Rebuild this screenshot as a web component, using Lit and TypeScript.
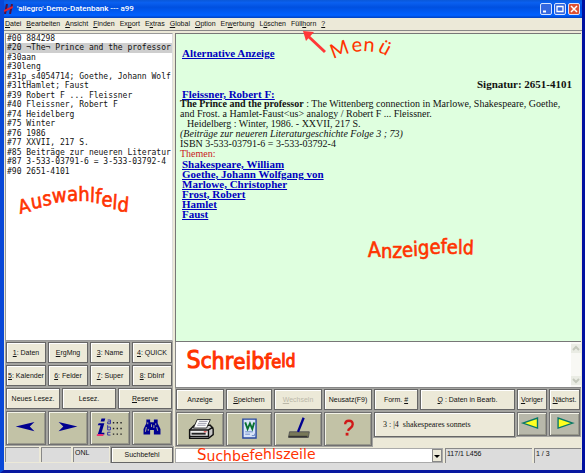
import { LitElement, html, svg, css } from "lit";
import { customElement, property } from "lit/decorators.js";

/** Character, baseline, font size, rotation in degrees, and an optional start of its own. */
type Glyph = [char: string, y: number, size: number, turn: number, x?: number];

/** A hand-placed caption whose letters follow a curve. */
@customElement("curved-note")
export class CurvedNote extends LitElement {
  @property({ attribute: false }) glyphs: Glyph[] = [];
  static styles = css`
    :host { display: block; pointer-events: none; }
    svg { display: block; overflow: visible; width: 10px; height: 10px; }
    text { font-family: var(--note-font, "DejaVu Sans Condensed", "DejaVu Sans", sans-serif); fill: #ff3300; stroke: #ff3300; stroke-width: var(--note-stroke, 0); }
  `;
  render() {
    return html`<svg role="img" aria-label=${this.glyphs.map((g) => g[0]).join("")}>
      <text>${this.glyphs.map(([c, y, s, r, x]) =>
        x === undefined
          ? svg`<tspan y=${y} rotate=${r} font-size=${s}>${c}</tspan>`
          : svg`<tspan x=${x} y=${y} rotate=${r} font-size=${s}>${c}</tspan>`)}</text>
    </svg>`;
  }
}

const auswahl: Glyph[] = [
  ["A", 214, 19, -14, 20], ["u", 209, 20, -9], ["s", 206, 20, -6], ["w", 203, 20, -5], ["a", 201, 20, -1], ["h", 201, 20, 0],
  ["l", 202, 20, 2], ["f", 203, 20, 4], ["e", 206, 20, 5], ["l", 209, 20, 4], ["d", 211, 20, 5],
];
const anzeige: Glyph[] = [
  ["A", 257, 21, -2, 368], ["n", 258, 20, 0], ["z", 258, 21, 0], ["e", 257, 20, -2], ["i", 256, 20, -2], ["g", 255, 20, -3],
  ["e", 254, 20, -2], ["f", 253, 19, 0], ["e", 254, 20, 0], ["l", 254, 19, 0], ["d", 254, 19, 2],
];
const schreib: Glyph[] = [
  ["S", 368, 24, -2, 187], ["c", 368, 22, 0], ["h", 369, 23, 0], ["r", 369, 23, 0], ["e", 369, 22, 0], ["i", 369, 23, 0],
  ["b", 369, 23, 0], ["f", 369, 22, 0], ["e", 368, 18, 0], ["l", 367, 18, 0], ["d", 367, 17, 0],
];
const suche: Glyph[] = [
  ["S", 460, 15, 0, 197], ["u", 461, 14, 0], ["c", 461, 14, 0], ["h", 461, 14, 0], ["b", 461, 14, 0], ["e", 461, 14, 0],
  ["f", 460, 14, 0], ["e", 460, 14, 0], ["h", 459, 14, 0], ["l", 459, 14, 0], ["s", 459, 14, 0], ["z", 459, 14, 0],
  ["e", 459, 14, 0], ["i", 459, 14, 0], ["l", 459, 14, 0], ["e", 459, 14, 0],
];
const menue: Glyph[] = [
  ["M", 59, 20, -20, 333], ["e", 52, 20, -4, 352], ["n", 51, 20, 5, 363], ["ü", 51, 20, 28, 377],
];

const menus: [string, string, string][] = [
  ["", "D", "atei"], ["", "B", "earbeiten"], ["", "A", "nsicht"], ["", "F", "inden"], ["Ex", "p", "ort"], ["E", "x", "tras"],
  ["", "G", "lobal"], ["", "O", "ption"], ["Er", "w", "erbung"], ["L", "ö", "schen"], ["Füll", "h", "orn"], ["", "?", ""],
];

const fields = [
  "#00 884298", "#20 ¬The¬ Prince and the professor", "#30aan", "#30leng", "#31p_s4054714; Goethe, Johann Wolf",
  "#31tHamlet; Faust", "#39 Robert F ... Fleissner", "#40 Fleissner, Robert F", "#74 Heidelberg", "#75 Winter",
  "#76 1986", "#77 XXVII, 217 S.", "#85 Beiträge zur neueren Literatur", "#87 3-533-03791-6 = 3-533-03792-4", "#90 2651-4101",
];

const themes = ["Shakespeare, William", "Goethe, Johann Wolfgang von", "Marlowe, Christopher", "Frost, Robert", "Hamlet", "Faust"];

const arrowLeft = html`<svg class="pic" viewBox="0 0 40 34"><path d="M9 15.500L29 10.500l-5 5 5 5z" fill="#000090"/></svg>`;
const arrowRight = html`<svg class="pic" viewBox="0 0 40 34"><path d="M30 15.500L10 10.500l5 5-5 5z" fill="#000090"/></svg>`;
const indexIcon = html`<svg class="pic" viewBox="0 0 40 34">
  <path d="M11 7h4l-1 3h-4zM8 12h6l-3 10h3v2H7l3-10H7z" fill="#000090"/><path d="M6 24.500h7" stroke="#f03070" stroke-width="2"/>
  <g fill="none" stroke="#3030a8"><path d="M17.500 8.500h3v4h-3v-2h3M17.500 14v5h3v-3h-3M20.500 21.500h-3v3h3"/></g>
  <path d="M23 11.500h10M23 17.500h10M23 23.500h10" stroke="#222" stroke-width="1.500" stroke-dasharray="1.500 2.500"/></svg>`;
const binoculars = html`<svg class="pic" viewBox="0 0 40 34">
  <path d="M14 8h4v3h4V8h4v4l3 6v6h-7v-5h-4v5h-7v-6l3-6z" fill="#000090"/>
  <path d="M15.500 11v2M14 16l-1 5M19.500 13v3M24 12v2M25 16l1 4M16 18v2M22 14v3" stroke="#b8b8a0" fill="none"/></svg>`;
const printer = html`<svg class="pic" viewBox="0 0 46 34">
  <path d="M12 18l5-5h17l3 4v6l-5 4H12z" fill="#c8c8c8" stroke="#111" stroke-width="1.500"/>
  <path d="M16 16l4-9h14l-4 9z" fill="#fff" stroke="#222"/><path d="M22 9h9M21 11h9M20 13h9" stroke="#99a"/>
  <path d="M12 18h20v7H12zM32 18l5-3" fill="#eee" stroke="#111" stroke-width="1.500"/><path d="M14 22h15" stroke="#222" stroke-width="2"/><path d="M27 20h3" stroke="#d22"/></svg>`;
const wordDoc = html`<svg class="pic" viewBox="0 0 46 34">
  <path d="M16.500 6.500h14v20h-14z" fill="#d8e4f8" stroke="#2848a0" stroke-width="1.500"/>
  <path d="M19 10l2.500 7 2.500-6 2.500 6 2-7" fill="none" stroke="#087030" stroke-width="2"/>
  <path d="M19 20h8M19 22.500h5M26 24h3v-2" stroke="#6888c8" fill="none"/></svg>`;
const brush = html`<svg class="pic" viewBox="0 0 46 34">
  <path d="M14 20h21l-1 6H13z" fill="#787858" stroke="#555"/><path d="M13 25h20" stroke="#333" stroke-width="1.500"/>
  <path d="M23 20L29 5" stroke="#000090" stroke-width="2.500"/></svg>`;
const question = html`<svg class="pic" viewBox="0 0 46 34">
  <path d="M20 12c0-5 8-5 8 0 0 4-4 4-5 7" fill="none" stroke="#d01818" stroke-width="2.500"/><path d="M20.500 22.500h3" stroke="#d01818" stroke-width="3"/></svg>`;
const prev = html`<svg class="pic" viewBox="0 0 30 24"><path d="M5 11L21 5.500v11z" fill="#ffff20" stroke="#087868" stroke-width="1.500"/></svg>`;
const next = html`<svg class="pic" viewBox="0 0 30 24"><path d="M24 11L8 5.500v11z" fill="#ffff20" stroke="#087868" stroke-width="1.500"/></svg>`;

@customElement("app-root")
export class AppRoot extends LitElement {
  static styles = css`
    * { box-sizing: border-box; }
    :host { display: flex; flex-direction: column; position: relative; min-height: 100vh; overflow: hidden; box-sizing: border-box;
      font: 7px/10px "Liberation Sans", Arial, sans-serif; color: #111; background: #ece9d8;
      border: solid #0848d8; border-width: 0 3px 3px 4px; border-right-color: #0010a0; border-bottom-color: #0818a0; }
    button, input, select, textarea { font: inherit; color: inherit; margin: 0; border-radius: 0; min-width: 0; }
    u { text-underline-offset: 1px; }
    .title { display: flex; align-items: center; gap: 4px; height: 18px; margin: 0 -3px 0 -4px; padding: 0 5px 0 4px; color: #fff;
      background: linear-gradient(#0a58d8, #0a60f0 15%, #0050e0 40%, #0060ff 85%, #0040c0); }
    .title h1 { flex: 1; margin: 0; font: 500 8px/12px Roboto, sans-serif; }
    .logo { width: 9px; height: 10px; }
    .caps { display: flex; gap: 2px; }
    .caps button { width: 12px; height: 12px; padding: 0; border: 1px solid #d8e4ff; border-radius: 2px; background: #3468e0; }
    .caps .close { background: #e05030; }
    .caps svg { display: block; width: 10px; height: 10px; }
    .menu { display: flex; gap: 5px; height: 13px; padding: 0 1px; border-bottom: 1px solid #888; }
    .menu button { padding: 0; border: 0; background: none; line-height: 10px; }
    .main { flex: 1; display: grid; grid-template-columns: 168fr 406fr; gap: 2px; padding: 2px 1px 0; }
    .col { display: flex; flex-direction: column; min-width: 0; }
    .list { flex: 1; width: 100%; padding: 0; border: 1px solid #999; border-right-color: #ddd; background: #fff; overflow: hidden; outline: 0;
      font: 8px/9px "DejaVu Sans Mono", "Liberation Mono", monospace; }
    .list option { padding: 0 1px; min-height: 0; line-height: 9px; }
    .list option:nth-child(even) { padding-bottom: 1px; }
    .grid { display: grid; gap: 2px; padding: 1px; }
    .four { grid-template-columns: repeat(4, minmax(0, 1fr)); }
    .three { grid-template-columns: repeat(3, minmax(0, 1fr)); }
    .right { grid-template-columns: 48fr 46fr 48fr 48fr 44fr 95fr 30fr 31fr; }
    .btn { height: 21px; padding: 0; white-space: nowrap; overflow: hidden; border: 1px solid #666; background: #ece9d8; box-shadow: inset 1px 1px #fff, 0 0 0 1px #a4a4a0; }
    .btn:disabled { color: #bbb8a8; }
    .tool { height: 34px; padding: 0; border: 1px solid #707070; background: #c2c2a6; box-shadow: inset 1px 1px #f4f4e8, inset -1px -1px #98988a, 0 0 0 1px #a4a4a0; }
    .pic { display: block; width: 100%; height: 100%; }
    .show { flex: 1; border: solid #777; border-width: 1px 0 1px 1px; background: #dfffdf; padding: 14px 9px 0 4px;
      font: 10px/10px "Liberation Serif", serif; }
    .show p, .show h2 { margin: 0; }
    .show a { color: #0000c0; font-weight: 700; }
    .show .link { padding-left: 2px; font-size: 11px; }
    .show .sig { padding: 21px 0 0; text-align: right; font-size: 11px; line-height: 10px; }
    .show .place { padding-left: 7px; }
    .show .red { color: #c82020; }
    .write { display: flex; height: 46px; border: solid #888; border-width: 0 0 1px 1px; background: #fff; }
    .write textarea { flex: 1; resize: none; border: 0; background: none; overflow: hidden; outline: 0; }
    .scroll { display: flex; flex-direction: column; justify-content: space-between; width: 10px; padding: 2px 0; background: #f8f8f4; }
    .scroll svg { display: block; width: 10px; height: 9px; background: #eaece4; }
    .record { grid-column: span 2; height: 25px; padding-left: 8px; text-align: left; font: 8px/10px "Liberation Serif", serif; }
    .small { height: 24px; background: #b8b8aa; }
    .foot { display: grid; gap: 2px; padding-top: 1px; }
    .leftfoot { grid-template-columns: 34fr 30fr 36fr 62fr; }
    .rightfoot { grid-template-columns: 268fr 87fr 47fr; }
    .cell { height: 15px; border: solid #888; border-width: 1px 0 0 1px; background: #dcdcdc; padding-left: 1px; line-height: 9px; }
    .foot .btn { height: 16px; }
    .combo { display: flex; height: 15px; background: #fff; border: 1px solid #aaa; }
    .combo input { flex: 1; border: 0; background: none; outline: 0; padding: 0 2px; }
    .combo button { width: 10px; padding: 0; border: 1px solid #888; background: #ece9d8; }
    .combo svg { display: block; width: 8px; height: 8px; }
    .end { height: 7px; background: #dcdcdc; }
    .note { position: absolute; left: -4px; top: 0; --note-stroke: 0.6px; }
    .tall { --note-stroke: 1px; }
    .regular { --note-font: "DejaVu Sans", sans-serif; --note-stroke: 0; }
    .hand { --note-font: Lato, sans-serif; --note-stroke: 0; }
    .pointer { position: absolute; left: 290px; top: 27px; width: 34px; height: 30px; pointer-events: none; }
  `;

  private label(a: string, b = "", c = "", off = false) {
    return html`<button class="btn" ?disabled=${off}>${a}<u>${b}</u>${c}</button>`;
  }
  private tool(name: string, pic: unknown, cls = "tool") {
    return html`<button class=${cls} aria-label=${name}>${pic}</button>`;
  }

  render() {
    return html`
      <header class="title">
        <svg class="logo" viewBox="0 0 9 10"><path d="M3 0L1 10M8 0L6 10" stroke="#501040" stroke-width="2"/><path d="M0 7l9-4" stroke="#e02030" stroke-width="2"/></svg>
        <h1>'allegro'-Demo-Datenbank --- a99</h1>
        <div class="caps">
          <button aria-label="Minimieren"><svg viewBox="0 0 10 10"><path d="M2 7.500h3" stroke="#fff" stroke-width="2"/></svg></button>
          <button aria-label="Maximieren"><svg viewBox="0 0 10 10"><path d="M2 2.500h6v5H2z" fill="none" stroke="#fff" stroke-width="1.300"/></svg></button>
          <button class="close" aria-label="Schließen"><svg viewBox="0 0 10 10"><path d="M2 2l6 6M8 2l-6 6" stroke="#fff" stroke-width="1.500"/></svg></button>
        </div>
      </header>
      <nav class="menu">${menus.map(([a, b, c]) => html`<button>${a}<u>${b}</u>${c}</button>`)}</nav>
      <main class="main">
        <section class="col">
          <select class="list" size="15" aria-label="Auswahlfeld">
            ${fields.map((f, i) => html`<option ?selected=${i === 1}>${f}</option>`)}
          </select>
          <div class="grid four">
            ${this.label("", "1", ": Daten")}${this.label("", "E", "rgMng")}${this.label("", "3", ": Name")}${this.label("", "4", ": QUICK")}
            ${this.label("", "5", ": Kalender")}${this.label("", "6", ": Felder")}${this.label("", "7", ": Super")}${this.label("", "8", ": DbInf")}
          </div>
          <div class="grid three">${this.label("Neues Lesez.")}${this.label("Lesez.")}${this.label("", "R", "eserve")}</div>
          <div class="grid four">
            ${this.tool("Zurück", arrowLeft)}${this.tool("Vor", arrowRight)}${this.tool("Index", indexIcon)}${this.tool("Suchen", binoculars)}
          </div>
          <div class="foot leftfoot">
            <span class="cell"></span><span class="cell"></span><span class="cell">ONL</span>${this.label("Suchbefehl")}
          </div>
        </section>
        <section class="col">
          <article class="show">
            <p class="link"><a href="#alt">Alternative Anzeige</a></p>
            <h2 class="sig">Signatur: 2651-4101</h2>
            <p class="link"><a href="#autor">Fleissner, Robert F:</a></p>
            <p><b>The Prince and the professor</b> : The Wittenberg connection in Marlowe, Shakespeare, Goethe,<br />and Frost. a Hamlet-Faust&lt;us&gt; analogy / Robert F ... Fleissner.</p>
            <p class="place">Heidelberg : Winter, 1986. - XXVII, 217 S.</p>
            <p><i>(Beiträge zur neueren Literaturgeschichte Folge 3 ; 73)</i></p>
            <p>ISBN 3-533-03791-6 = 3-533-03792-4</p>
            <p class="red">Themen:</p>
            ${themes.map((t) => html`<p class="link"><a href="#thema">${t}</a></p>`)}
          </article>
          <div class="write">
            <textarea aria-label="Schreibfeld"></textarea>
            <div class="scroll" aria-hidden="true">
              <svg viewBox="0 0 10 9"><path d="M2 6l3-3 3 3" fill="none" stroke="#c4c8bc" stroke-width="2"/></svg>
              <svg viewBox="0 0 10 9"><path d="M2 3l3 3 3-3" fill="none" stroke="#c4c8bc" stroke-width="2"/></svg>
            </div>
          </div>
          <div class="grid right">
            ${this.label("Anzeige")}${this.label("", "S", "peichern")}${this.label("", "W", "echseln", true)}${this.label("Neusatz(F9)")}
            ${this.label("Form. ", "#")}${this.label("", "Q", " : Daten in Bearb.")}${this.label("", "V", "origer")}${this.label("", "N", "ächst.")}
            ${this.tool("Drucken", printer)}${this.tool("Word", wordDoc)}${this.tool("Leeren", brush)}${this.tool("Hilfe", question)}
            <button class="btn record">3 : |4 &nbsp;shakespeares sonnets</button>
            ${this.tool("Voriger", prev, "tool small")}${this.tool("Nächster", next, "tool small")}
          </div>
          <div class="foot rightfoot">
            <div class="combo"><input aria-label="Suchbefehlszeile" /><button aria-label="Liste"><svg viewBox="0 0 8 8"><path d="M1 3h6L4 6z"/></svg></button></div>
            <span class="cell">117/1 L456</span><span class="cell">1 / 3</span>
          </div>
        </section>
      </main>
      <div class="end"></div>
      <svg class="pointer" viewBox="0 0 34 30"><path d="M31 25L14 9" stroke="#ff3838" stroke-width="3"/><path d="M9 4l11 1-8 9z" fill="#ff3838"/></svg>
      <curved-note class="note" .glyphs=${auswahl}></curved-note>
      <curved-note class="note" .glyphs=${anzeige}></curved-note>
      <curved-note class="note tall" .glyphs=${schreib}></curved-note>
      <curved-note class="note regular" .glyphs=${suche}></curved-note>
      <curved-note class="note hand" .glyphs=${menue}></curved-note>
    `;
  }
}
